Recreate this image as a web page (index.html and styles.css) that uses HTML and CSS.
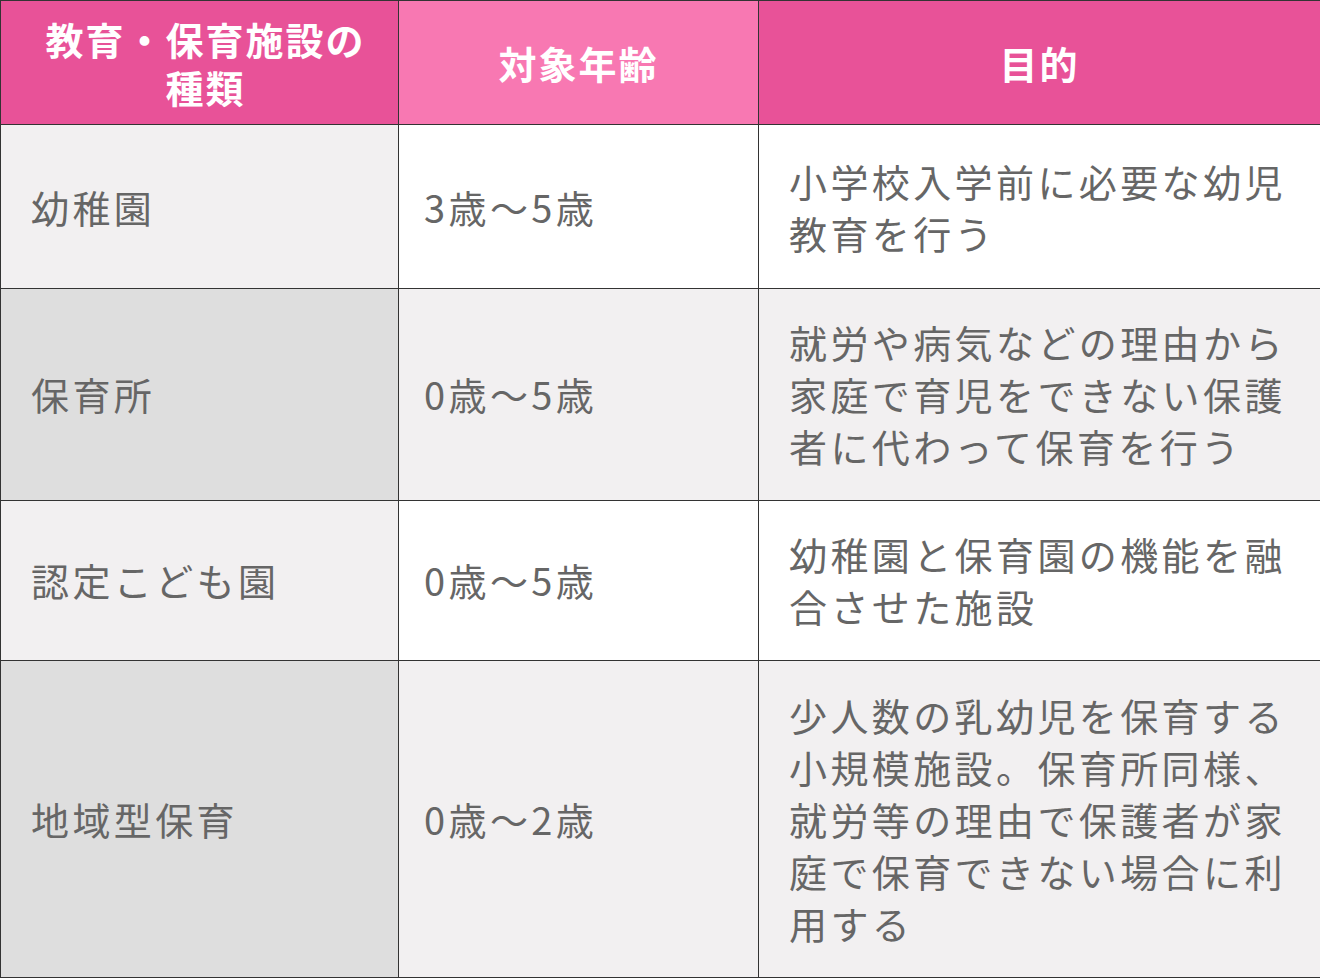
FILE: index.html
```html
<!DOCTYPE html>
<html lang="ja">
<head>
<meta charset="utf-8">
<link rel="stylesheet" href="styles.css">
</head>
<body>
<table class="tbl">
  <colgroup>
    <col class="c1"><col class="c2"><col class="c3">
  </colgroup>
  <thead>
    <tr>
      <th class="h-dark h-first"><span class="hl">教育・保育施設の</span><span class="hl">種類</span></th>
      <th class="h-light">対象年齢</th>
      <th class="h-dark">目的</th>
    </tr>
  </thead>
  <tbody>
    <tr class="odd first">
      <td class="name">幼稚園</td>
      <td class="age">3歳～5歳</td>
      <td class="desc">小学校入学前に必要な幼児教育を行う</td>
    </tr>
    <tr class="even">
      <td class="name">保育所</td>
      <td class="age">0歳～5歳</td>
      <td class="desc">就労や病気などの理由から家庭で育児をできない保護者に代わって保育を行う</td>
    </tr>
    <tr class="odd">
      <td class="name">認定こども園</td>
      <td class="age">0歳～5歳</td>
      <td class="desc">幼稚園と保育園の機能を融合させた施設</td>
    </tr>
    <tr class="even last">
      <td class="name">地域型保育</td>
      <td class="age">0歳～2歳</td>
      <td class="desc">少人数の乳幼児を保育する小規模施設。保育所同様、就労等の理由で保護者が家庭で保育できない場合に利用する</td>
    </tr>
  </tbody>
</table>
</body>
</html>
```
FILE: styles.css
```css
html, body {
  margin: 0;
  padding: 0;
  background: #ffffff;
}
body {
  font-family: "Noto Sans CJK JP", "Noto Sans", sans-serif;
}
.tbl {
  width: 1320px;
  border-collapse: collapse;
  table-layout: fixed;
}
.c1 { width: 398px; }
.c2 { width: 360px; }
.c3 { width: 562px; }
.tbl th, .tbl td {
  border: 1px solid #333333;
}
.tbl th {
  height: 123px;
  padding: 0 8px;
  color: #ffffff;
  font-size: 38px;
  font-weight: 700;
  line-height: 48px;
  letter-spacing: 2px;
  text-align: center;
  vertical-align: middle;
}
.tbl th.h-first {
  padding: 0 2px 0 14px;
}
.hl {
  display: block;
  height: 48px;
}
.h-dark { background: #e85298; }
.h-light { background: #f878b2; }
.tbl td {
  color: #666666;
  font-size: 38px;
  line-height: 52px;
  letter-spacing: 3.4px;
  vertical-align: middle;
  padding: 27px 28px 28px 30px;
  text-align: left;
}
.tbl td.age { padding-left: 25px; }
.tbl td.desc { padding-right: 26px; }
.first td { padding-top: 30px; padding-bottom: 29px; }
.last td { padding-top: 28px; padding-bottom: 28px; }
.odd .name { background: #f2f0f1; }
.odd .age, .odd .desc { background: #ffffff; }
.even .name { background: #dedede; }
.even .age, .even .desc { background: #f2f0f1; }
```
